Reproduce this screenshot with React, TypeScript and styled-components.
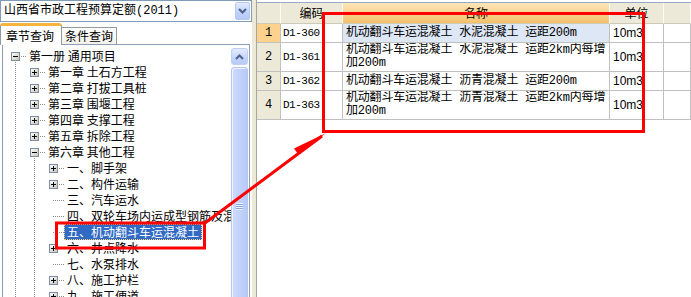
import React from 'react'
import styled, { createGlobalStyle, css } from 'styled-components'

const mono = `"Liberation Mono", "Noto Sans CJK SC", monospace`
const cjk = `"Noto Sans CJK SC", sans-serif`

type TreeNode = {
  level: number
  label: string
  kind: 'open' | 'closed' | 'leaf'
  selected?: boolean
}

const tree: TreeNode[] = [
  { level: 0, label: '第一册 通用项目', kind: 'open' },
  { level: 1, label: '第一章 土石方工程', kind: 'closed' },
  { level: 1, label: '第二章 打拔工具桩', kind: 'closed' },
  { level: 1, label: '第三章 围堰工程', kind: 'closed' },
  { level: 1, label: '第四章 支撑工程', kind: 'closed' },
  { level: 1, label: '第五章 拆除工程', kind: 'closed' },
  { level: 1, label: '第六章 其他工程', kind: 'open' },
  { level: 2, label: '一、脚手架', kind: 'closed' },
  { level: 2, label: '二、构件运输', kind: 'closed' },
  { level: 2, label: '三、汽车运水', kind: 'leaf' },
  { level: 2, label: '四、双轮车场内运成型钢筋及混凝土', kind: 'leaf' },
  { level: 2, label: '五、机动翻斗车运混凝土', kind: 'leaf', selected: true },
  { level: 2, label: '六、井点降水', kind: 'closed' },
  { level: 2, label: '七、水泵排水', kind: 'leaf' },
  { level: 2, label: '八、施工护栏', kind: 'closed' },
  { level: 2, label: '九、施工便道', kind: 'closed' },
]

type Item = { no: number; code: string; name: string[]; unit: string; selected?: boolean }

const items: Item[] = [
  { no: 1, code: 'D1-360', name: ['机动翻斗车运混凝土 水泥混凝土 运距200m'], unit: '10m3', selected: true },
  { no: 2, code: 'D1-361', name: ['机动翻斗车运混凝土 水泥混凝土 运距2km内每增', '加200m'], unit: '10m3' },
  { no: 3, code: 'D1-362', name: ['机动翻斗车运混凝土 沥青混凝土 运距200m'], unit: '10m3' },
  { no: 4, code: 'D1-363', name: ['机动翻斗车运混凝土 沥青混凝土 运距2km内每增', '加200m'], unit: '10m3' },
]

const App = () => (
  <>
    <GlobalStyle />
    <Window>
      <LeftPanel>
        <Combo>
          <ComboText>山西省市政工程预算定额(2011)</ComboText>
          <DropButton><Chevron dir="down" /></DropButton>
        </Combo>

        <TabRow>
          <Tab $active>章节查询</Tab>
          <Tab>条件查询</Tab>
        </TabRow>

        <TreePanel>
          <TreeBody>
            {tree.map((node, i) => (
              <TreeRow key={i}>
                {Array.from({ length: node.level }).map((_, j) => <Guide key={j} />)}
                {node.kind === 'leaf' ? (
                  <Twisty><LeafDash /></Twisty>
                ) : (
                  <Twisty $stem={node.kind === 'open'}>
                    <ExpandBox open={node.kind === 'open'} />
                    <Dash />
                  </Twisty>
                )}
                <Label $selected={node.selected}>{node.label}</Label>
              </TreeRow>
            ))}
          </TreeBody>
          <ScrollBar>
            <ScrollButton><Chevron dir="up" /></ScrollButton>
            <Thumb><Grip /></Thumb>
          </ScrollBar>
        </TreePanel>
      </LeftPanel>

      <Splitter />

      <RightPanel>
        <Grid>
          <Row $height={21}>
            <HeadCell />
            <HeadCell>编码</HeadCell>
            <HeadCell $active>名称</HeadCell>
            <HeadCell>单位</HeadCell>
            <HeadCell />
          </Row>
          {items.map(item => (
            <Row key={item.no} $height={item.name.length > 1 ? 29 : 19}>
              <NumCell $active={item.selected}>{item.no}</NumCell>
              <CodeCell>{item.code}</CodeCell>
              <NameCell $active={item.selected}>
                {item.name.map((line, i) => <NameLine key={i}>{line}</NameLine>)}
              </NameCell>
              <UnitCell>{item.unit}</UnitCell>
              <Cell />
            </Row>
          ))}
        </Grid>
      </RightPanel>

      <Annotation width="691" height="297" viewBox="0 0 691 297">
        <rect x="56.5" y="223" width="148" height="25" fill="none" stroke="#ff0000" strokeWidth="3" />
        <rect x="323.5" y="13.5" width="320" height="118" fill="none" stroke="#ff0000" strokeWidth="3" />
        <line x1="205" y1="223" x2="322" y2="136" stroke="#ff0000" strokeWidth="3" />
        <polygon points="326,133 294,148.5 298,154" fill="#ff0000" />
      </Annotation>
    </Window>
  </>
)

const Chevron = ({ dir }: { dir: 'up' | 'down' }) => (
  <svg width="9" height="6" viewBox="0 0 9 6">
    <path
      d={dir === 'down' ? 'M1 1L4.5 4.5L8 1' : 'M1 5L4.5 1.5L8 5'}
      fill="none"
      stroke="#4d6185"
      strokeWidth="2"
    />
  </svg>
)

const ExpandBox = ({ open }: { open: boolean }) => (
  <svg width="9" height="9" viewBox="0 0 9 9" style={{ flexShrink: 0 }}>
    <defs>
      <linearGradient id="tb" x1="0" y1="0" x2="1" y2="1">
        <stop offset="0" stopColor="#ffffff" />
        <stop offset="1" stopColor="#c6c2b0" />
      </linearGradient>
    </defs>
    <rect x="0.5" y="0.5" width="8" height="8" fill="url(#tb)" stroke="#7a8ea8" />
    <path d="M2 4.5H7" stroke="#000" />
    {!open && <path d="M4.5 2V7" stroke="#000" />}
  </svg>
)

const GlobalStyle = createGlobalStyle`
  html, body { margin: 0; padding: 0; background: #fff; }
  body {
    font-family: ${mono};
    font-size: 12px;
    color: #000;
  }
`

const Window = styled.div`
  position: relative;
  display: flex;
  width: 691px;
  height: 297px;
  overflow: hidden;
  background: #fff;
`

const LeftPanel = styled.div`
  display: flex;
  flex-direction: column;
  width: 252px;
  flex-shrink: 0;
  background: #fff;
`

const Combo = styled.div`
  display: flex;
  align-items: center;
  height: 22px;
  box-sizing: border-box;
  border: 1px solid #7f9db9;
  padding: 0 1px 0 3px;
`

const ComboText = styled.span`
  flex: 1;
  line-height: 14px;
  white-space: nowrap;
`

const DropButton = styled.div`
  display: flex;
  align-items: center;
  justify-content: center;
  width: 15px;
  height: 18px;
  box-sizing: border-box;
  border: 1px solid #b8caf3;
  border-radius: 2px;
  background: linear-gradient(#e3ebfe, #c0d2fa 60%, #b4c9f6);
`

const TabRow = styled.div`
  display: flex;
  align-items: flex-end;
  height: 21px;
  margin-top: 1px;
`

const Tab = styled.div<{ $active?: boolean }>`
  display: flex;
  align-items: center;
  box-sizing: border-box;
  border: 1px solid #919b9c;
  border-bottom: none;
  font-family: ${cjk};
  line-height: 14px;
  white-space: nowrap;

  ${p => p.$active
    ? css`
      position: relative;
      z-index: 1;
      height: 22px;
      margin-bottom: -1px;
      padding: 0 7px 0 5px;
      border-top: 3px solid #f6b43c;
      border-radius: 3px 3px 0 0;
      background: #fff;
    `
    : css`
      height: 17px;
      padding: 0 3px 0 3px;
      border-left: none;
      background: linear-gradient(#ffffff, #f3f2ec);
    `}
`

const TreePanel = styled.div`
  display: flex;
  flex: 1;
  min-height: 0;
  margin: 0 2px 0 2px;
  border: 1px solid #8c9eb6;
  border-bottom: none;
  overflow: hidden;
`

const TreeBody = styled.div`
  flex: 1;
  min-width: 0;
  padding-top: 3px;
  overflow: hidden;
`

const dotsV = (x: number) => css`
  background-image: repeating-linear-gradient(to bottom, #8a8a8a 0 1px, transparent 1px 2px);
  background-repeat: no-repeat;
  background-size: 1px 100%;
  background-position: ${x}px 0;
`

const TreeRow = styled.div`
  display: flex;
  align-items: center;
  height: 16px;
  white-space: nowrap;
`

const Guide = styled.span`
  align-self: stretch;
  flex-shrink: 0;
  width: 19px;
  ${dotsV(12)}
`

const Twisty = styled.span<{ $stem?: boolean }>`
  display: flex;
  align-items: center;
  align-self: stretch;
  flex-shrink: 0;
  width: 23px;
  padding-left: 8px;
  box-sizing: border-box;

  ${p => p.$stem && css`
    ${dotsV(12)}
    background-size: 1px 4px;
    background-position: 12px 12px;
  `}
`

const Dash = styled.span`
  flex: 1;
  height: 0;
  margin-left: 1px;
  border-top: 1px dotted #8a8a8a;
`

const LeafDash = styled(Dash)`
  margin-left: 4px;
`

const Label = styled.span<{ $selected?: boolean }>`
  padding: 0 2px;
  line-height: 14px;
  border: 1px solid transparent;
  font-family: ${cjk};

  ${p => p.$selected && css`
    background: #316ac5;
    color: #fff;
    border: 1px dotted #f3d27a;
  `}
`

const ScrollBar = styled.div`
  display: flex;
  flex-direction: column;
  gap: 2px;
  flex-shrink: 0;
  width: 17px;
  margin: 3px 1px 0 0;
  overflow: hidden;
  background: #fbfbf8;
`

const ScrollButton = styled.div`
  display: flex;
  align-items: center;
  justify-content: center;
  flex-shrink: 0;
  height: 17px;
  box-sizing: border-box;
  border: 1px solid #bccdf6;
  border-radius: 3px;
  background: linear-gradient(#e3ebfe, #c3d4fb 60%, #b8cbf6);
`

const Thumb = styled.div`
  display: flex;
  align-items: center;
  justify-content: center;
  flex-shrink: 0;
  height: 278px;
  box-sizing: border-box;
  border: 1px solid #b4c7f2;
  border-radius: 3px;
  box-shadow: inset 1px 1px 0 #eef3ff;
  background: linear-gradient(to right, #cfdcfd, #c1d2fb 50%, #b7caf6);
`

const Grip = styled.span`
  width: 7px;
  height: 7px;
  background: repeating-linear-gradient(to bottom, #eef4ff 0 1px, #8aa6de 1px 2px);
`

const Splitter = styled.div`
  flex-shrink: 0;
  width: 4px;
  background: #ece9d8;
  border-right: 1px solid #a7a69a;
`

const RightPanel = styled.div`
  flex: 1;
  min-width: 0;
  padding-top: 2px;
  background: #fff;
`

const Grid = styled.div`
  border-top: 1px solid #9aaac4;
`

const Row = styled.div<{ $height: number }>`
  display: grid;
  grid-template-columns: 24px 62px 267px 54px 1fr;
  height: ${p => p.$height}px;
`

const Cell = styled.div`
  display: flex;
  align-items: center;
  box-sizing: border-box;
  min-width: 0;
  border-right: 1px solid #c0c0c0;
  border-bottom: 1px solid #c0c0c0;
  white-space: nowrap;
  overflow: hidden;
`

const HeadCell = styled(Cell)<{ $active?: boolean }>`
  justify-content: center;
  font-family: ${cjk};
  line-height: 14px;
  border-right-color: #fbfaf4;
  border-bottom-color: #cdcabb;
  background: ${p => p.$active
    ? 'linear-gradient(#fde6b8, #f9d595 45%, #f3c06a)'
    : '#ece9d8'};
`

const NumCell = styled(Cell)<{ $active?: boolean }>`
  justify-content: center;
  background: ${p => p.$active ? '#fdd28c' : '#ece9d8'};
`

const CodeCell = styled(Cell)`
  padding-left: 2px;
  font-size: 11px;
  letter-spacing: -0.5px;
`

const NameCell = styled(Cell)<{ $active?: boolean }>`
  flex-direction: column;
  align-items: flex-start;
  justify-content: center;
  padding: 0 0 0 3px;
  background: ${p => p.$active ? '#dde7f5' : '#fff'};
`

const NameLine = styled.div`
  line-height: 13px;
  letter-spacing: -0.2px;
`

const UnitCell = styled(Cell)`
  padding-left: 3px;
  font-family: "Liberation Sans", sans-serif;
`

const Annotation = styled.svg`
  position: absolute;
  top: 0;
  left: 0;
  pointer-events: none;
`

export default App
